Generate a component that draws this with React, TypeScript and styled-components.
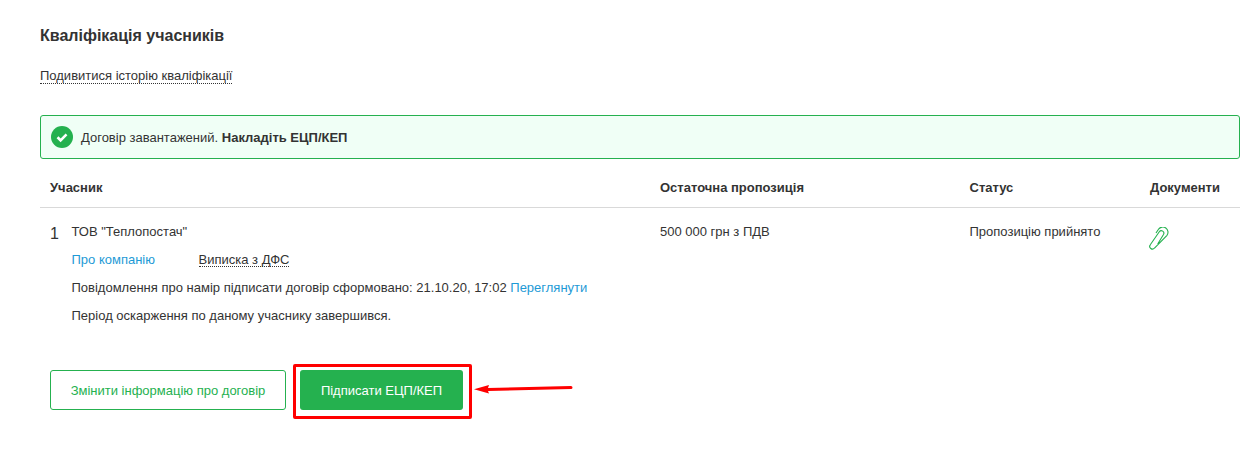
import React from "react";
import styled, { createGlobalStyle } from "styled-components";

const Global = createGlobalStyle`
  html, body { margin: 0; padding: 0; background: #fff; }
  body { font-family: "Liberation Sans", Arial, sans-serif; color: #333; font-size: 13px; }
`;

const Page = styled.div`
  box-sizing: border-box;
  width: 1248px;
  height: 471px;
  padding: 27px 8px 0 40px;
  overflow: hidden;
  display: flex;
  flex-direction: column;
`;

const Title = styled.h2`
  margin: 0;
  font-size: 16px;
  line-height: 18px;
  font-weight: 700;
  color: #333;
`;

const HistoryRow = styled.div`
  margin-top: 23px;
  height: 16px;
  line-height: 16px;
`;

const DottedLink = styled.span`
  display: inline-block;
  line-height: 15px;
  border-bottom: 1px dotted #333;
  color: #333;
`;

const Alert = styled.div`
  box-sizing: border-box;
  flex: none;
  margin-top: 31px;
  height: 44px;
  display: flex;
  align-items: center;
  gap: 8px;
  padding: 0 10px;
  background: #f0fff6;
  border: 1px solid #25b14f;
  border-radius: 3px;
`;

const Bold = styled.b`
  font-weight: 700;
`;

const Grid = `
  display: grid;
  grid-template-columns: 610px 309.5px 180.5px 1fr;
  padding-left: 10px;
`;

const HeadRow = styled.div`
  ${Grid}
  box-sizing: border-box;
  flex: none;
  height: 49px;
  padding-top: 8px;
  align-items: center;
  font-weight: 700;
  border-bottom: 1px solid #d9d9d9;
`;

const BodyRow = styled.div`
  ${Grid}
  padding-top: 16px;
`;

const Participant = styled.div`
  display: flex;
  gap: 13.5px;
`;

const Index = styled.div`
  font-size: 16px;
  line-height: 18px;
  padding-top: 1px;
  width: 8px;
`;

const Lines = styled.div`
  display: flex;
  flex-direction: column;
  gap: 13px;
`;

const Line = styled.div`
  line-height: 15px;
`;

const Blue = styled.span`
  color: #1e9ad6;
`;

const LinksLine = styled(Line)`
  display: flex;
  gap: 43.5px;
  height: 15px;
`;

const Cell = styled.div`
  line-height: 15px;
`;

const ClipIcon = styled.svg`
  display: block;
  margin: 3px 0 0 -1px;
`;

const Actions = styled.div`
  display: flex;
  gap: 14px;
  margin-top: 47px;
  padding-left: 10px;
  align-items: flex-start;
`;

const OutlineButton = styled.button`
  box-sizing: border-box;
  width: 236px;
  height: 40px;
  border: 1px solid #25b14f;
  border-radius: 3px;
  background: #fff;
  color: #25b14f;
  font: inherit;
  padding: 0;
`;

const SignWrap = styled.div`
  position: relative;
`;

const SignButton = styled.button`
  display: block;
  box-sizing: border-box;
  width: 163px;
  height: 40px;
  border: 0;
  border-radius: 3px;
  background: #25b14f;
  color: #fff;
  font: inherit;
  padding: 0;
`;

const RedFrame = styled.div`
  position: absolute;
  left: -7px;
  top: -6px;
  width: 179px;
  height: 55px;
  box-sizing: border-box;
  border: 3px solid #f00;
  border-radius: 2px;
`;

const Arrow = styled.svg`
  position: absolute;
  left: 173px;
  top: 13px;
`;

export default function App() {
  return (
    <Page>
      <Global />
      <Title>Кваліфікація учасників</Title>
      <HistoryRow>
        <DottedLink>Подивитися історію кваліфікації</DottedLink>
      </HistoryRow>
      <Alert>
        <svg width="22" height="22" viewBox="0 0 22 22">
          <circle cx="11" cy="11" r="11" fill="#25b14f" />
          <path d="M6.500 11.300l3.100 3 5.900-6" fill="none" stroke="#fff" strokeWidth="2.600" />
        </svg>
        <span>
          Договір завантажений. <Bold>Накладіть ЕЦП/КЕП</Bold>
        </span>
      </Alert>
      <HeadRow>
        <div>Учасник</div>
        <div>Остаточна пропозиція</div>
        <div>Статус</div>
        <div>Документи</div>
      </HeadRow>
      <BodyRow>
        <Participant>
          <Index>1</Index>
          <Lines>
            <Line>ТОВ "Теплопостач"</Line>
            <LinksLine>
              <Blue>Про компанію</Blue>
              <DottedLink>Виписка з ДФС</DottedLink>
            </LinksLine>
            <Line>
              Повідомлення про намір підписати договір сформовано: 21.10.20, 17:02 <Blue>Переглянути</Blue>
            </Line>
            <Line>Період оскарження по даному учаснику завершився.</Line>
          </Lines>
        </Participant>
        <Cell>500 000 грн з ПДВ</Cell>
        <Cell>Пропозицію прийнято</Cell>
        <Cell>
          <ClipIcon width="20" height="23" viewBox="0 0 20 23" fill="none" stroke="#25b14f" strokeWidth="1.100">
            <path d="M8.700 17L14.500 7.500A2.500 2.500 0 0 0 10.300 4.800L1.300 17.800A2.500 2.500 0 0 0 5.500 21L18 8.300A4.800 4.800 0 0 0 9.500 2.200L7 6" />
          </ClipIcon>
        </Cell>
      </BodyRow>
      <Actions>
        <OutlineButton>Змінити інформацію про договір</OutlineButton>
        <SignWrap>
          <SignButton>Підписати ЕЦП/КЕП</SignButton>
          <RedFrame />
          <Arrow width="100" height="12" viewBox="0 0 100 12">
            <path d="M1 6.300L16 2L15 5L98 2.900A1.500 1.500 0 0 1 98 5.900L15 8L16 10.500z" fill="#f00" />
          </Arrow>
        </SignWrap>
      </Actions>
    </Page>
  );
}
